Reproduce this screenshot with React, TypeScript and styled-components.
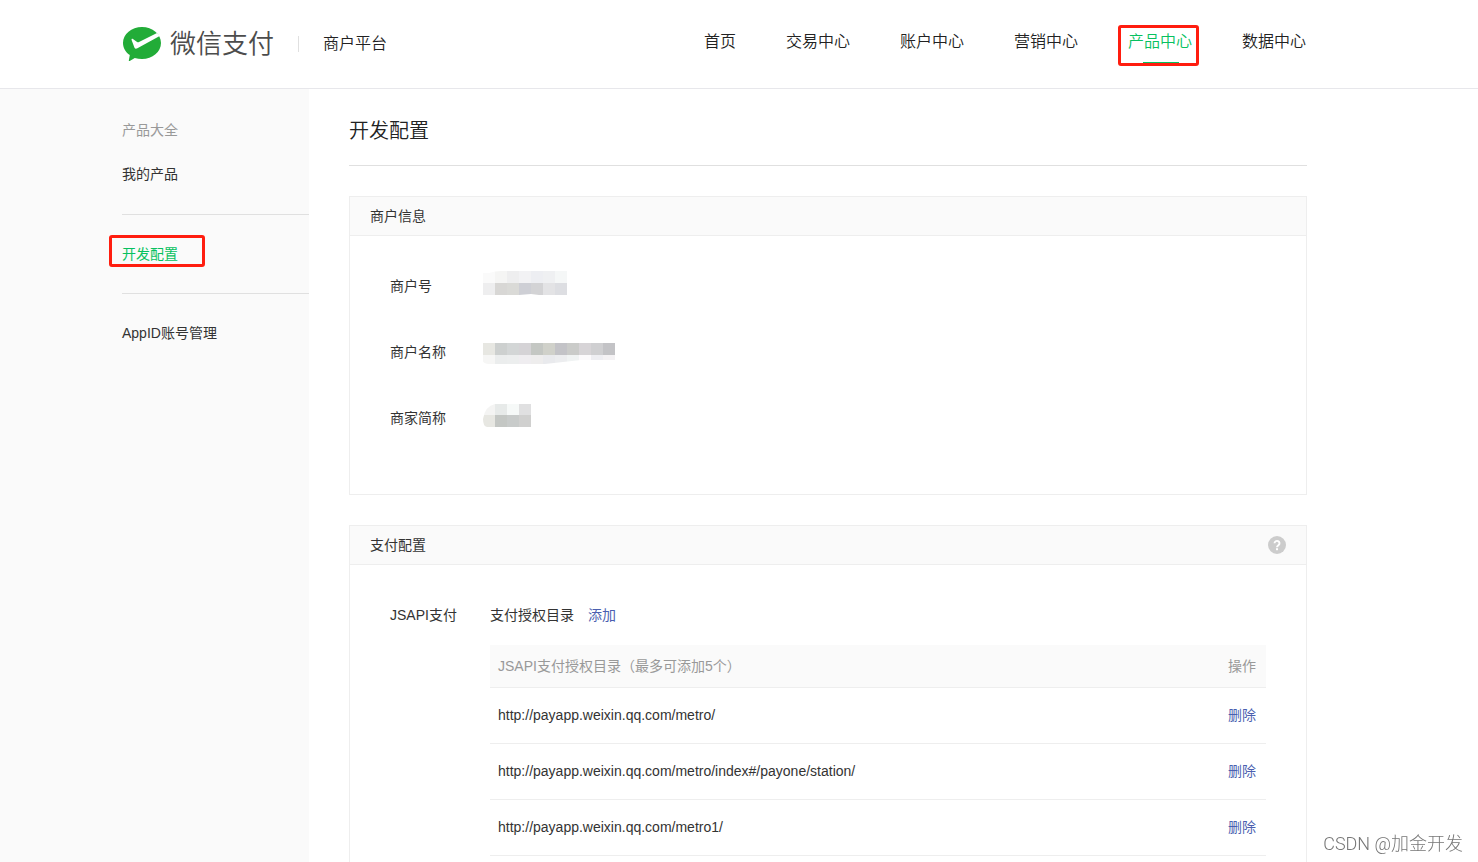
import React from 'react';
import styled, { createGlobalStyle } from 'styled-components';

const GlobalStyle = createGlobalStyle`
  *, *::before, *::after { box-sizing: border-box; }
  html, body { margin: 0; padding: 0; }
  body {
    font-family: "Liberation Sans", "Noto Sans CJK SC", sans-serif;
    font-size: 14px;
    line-height: 20px;
    color: #333;
    background: #fff;
  }
  h1, h2, p, ul, dl, dd { margin: 0; padding: 0; font-weight: 400; }
  ul { list-style: none; }
`;

const Page = styled.div`
  min-height: 100vh;
  display: flex;
  flex-direction: column;
`;

const Header = styled.header`
  display: flex;
  align-items: center;
  height: 89px;
  padding: 0 172px 0 122px;
  border-bottom: 1px solid #e7e7eb;
`;

const Brand = styled.a`
  display: flex;
  align-items: center;
  color: #4c4c4c;
  text-decoration: none;
`;

const BrandName = styled.span`
  margin-left: 8px;
  font-size: 26px;
  line-height: 36px;
  font-weight: 350;
  white-space: nowrap;
`;

const Platform = styled.span`
  margin-left: 24px;
  display: flex;
  align-items: center;
  font-size: 16px;
  line-height: 24px;
  font-weight: 350;
  white-space: nowrap;
  color: #222;

  &::before {
    content: "";
    width: 1px;
    height: 16px;
    margin-right: 24px;
    background: #e0e0e0;
  }
`;

const Nav = styled.nav`
  display: flex;
  gap: 50px;
  margin-left: auto;
  padding-bottom: 4px;
`;

const NavLink = styled.a<{ $active?: boolean }>`
  position: relative;
  font-size: 16px;
  line-height: 24px;
  font-weight: 350;
  white-space: nowrap;
  text-decoration: none;
  color: ${(p) => (p.$active ? '#07c160' : '#222')};

  &::after {
    content: "";
    display: ${(p) => (p.$active ? 'block' : 'none')};
    position: absolute;
    left: 15px;
    bottom: -10px;
    width: 36px;
    height: 2px;
    background: #07c160;
  }
`;

const Marker = styled.span`
  position: absolute;
  border: 3px solid #ff1d0f;
  border-radius: 3px;
  pointer-events: none;
`;

const NavMarker = styled(Marker)`
  inset: -5px -7px -12px -10px;
  z-index: 1;
`;

const MenuMarker = styled(Marker)`
  inset: -9px -27px -3px -13px;
`;

const Body = styled.div`
  flex: 1;
  display: flex;
`;

const Sidebar = styled.aside`
  flex: none;
  width: 309px;
  padding: 31px 0 0 122px;
  background: #fafafa;
`;

const MenuGroup = styled.ul`
  display: flex;
  flex-direction: column;
  align-items: flex-start;
  gap: 24px;
  padding-bottom: 30px;

  & + & {
    padding: 29px 0;
    border-top: 1px solid #e0e0e0;
  }
`;

const MenuLink = styled.a<{ $tone?: 'muted' | 'active' }>`
  position: relative;
  display: block;
  text-decoration: none;
  color: ${(p) => (p.$tone === 'muted' ? '#999' : p.$tone === 'active' ? '#07c160' : '#333')};
`;

const Main = styled.main`
  flex: 1;
  min-width: 0;
  display: flex;
  flex-direction: column;
  padding: 28px 171px 0 40px;
`;

const Title = styled.h1`
  && { font-weight: 350; }
  padding-bottom: 20px;
  font-size: 20px;
  line-height: 28px;
  color: #222;
  border-bottom: 1px solid #e0e0e0;
`;

const Card = styled.section<{ $fill?: boolean }>`
  margin-top: 30px;
  border: 1px solid #eee;
  ${(p) => p.$fill && 'flex: 1; border-bottom: 0;'}
`;

const CardHead = styled.div`
  display: flex;
  align-items: center;
  justify-content: space-between;
  height: 39px;
  padding: 0 20px;
  background: #fafafa;
  border-bottom: 1px solid #eee;
`;

const CardTitle = styled.h2`
  font-size: 14px;
`;

const HelpButton = styled.button`
  display: block;
  padding: 0;
  border: 0;
  background: none;
  line-height: 0;
  cursor: pointer;
`;

const InfoList = styled.dl`
  display: flex;
  flex-direction: column;
  gap: 46px;
  padding: 40px 40px 66px;
`;

const InfoRow = styled.div`
  display: flex;
  height: 20px;
`;

const InfoLabel = styled.dt`
  width: 93px;
`;

const InfoValue = styled.dd<{ $rise: number }>`
  height: 0;
  margin-top: -${(p) => p.$rise}px;
`;

const PayConfig = styled.div`
  display: flex;
  padding: 40px 40px 0;
`;

const PayLabel = styled.div`
  flex: none;
  width: 100px;
`;

const PayContent = styled.div`
  flex: 1;
  min-width: 0;
`;

const TextLink = styled.a`
  color: #4b5fb0;
  text-decoration: none;
`;

const PayTitle = styled.div`
  display: flex;
  gap: 14px;
`;

const Table = styled.table`
  width: 100%;
  margin-top: 20px;
  border-collapse: separate;
  border-spacing: 0;
`;

const HeadCell = styled.th<{ $end?: boolean }>`
  height: 43px;
  padding: 0 10px 0 8px;
  font-weight: 400;
  text-align: ${(p) => (p.$end ? 'right' : 'left')};
  color: #999;
  background: #fafafa;
  border-bottom: 1px solid #eee;
`;

const Cell = styled.td<{ $end?: boolean }>`
  height: 56px;
  padding: 0 10px 2px 8px;
  text-align: ${(p) => (p.$end ? 'right' : 'left')};
  border-bottom: 1px solid #eee;
`;

const Watermark = styled.div`
  position: fixed;
  right: 15px;
  bottom: 6px;
  font-family: Roboto, "Noto Sans CJK SC", sans-serif;
  font-size: 18px;
  line-height: 24px;
  font-weight: 300;
  color: #777;
`;

const Logo = () => (
  <svg width="40" height="36" viewBox="0 0 40 36" aria-hidden="true">
    <path
      d="M20 1C9.500 1 1 8.100 1 17c0 5 2.600 9.200 6.800 12.100L6.800 34.500c0 .5.400.600.900.400l5.100-2.900c2.300.700 4.700 1 7.200 1 10.500 0 19-7.100 19-16S30.500 1 20 1z"
      fill="#22ac38"
    />
    <path
      d="M9.600 13.900c-.300-.9.500-1.500 1.300-1l4.200 3.100c.600.400 1.200.5 1.900.1L35 7.100l2.700 2.900L15.400 22.300c-1.200.7-2.400.6-2.900-.6z"
      fill="#fff"
    />
  </svg>
);

const HelpIcon = () => (
  <svg width="18" height="18" viewBox="0 0 18 18" aria-hidden="true">
    <circle cx="9" cy="9" r="9" fill="#ccc" />
    <path d="M6.500 7.200a2.500 2.400 0 1 1 4.100 1.900C9.600 9.900 9 10.100 9 11.300" fill="none" stroke="#fff" strokeWidth="1.900" />
    <rect x="8" y="12.200" width="2" height="2" fill="#fff" />
  </svg>
);

type Mosaic = { label: string; rise: number; shape: string; rows: { y: number; h: number; tones: string[] }[] };

const merchantInfo: Mosaic[] = [
  {
    label: '商户号',
    rise: 5,
    shape: 'M0 2h6q6-2 12-2h66v24H56l-8-1-12 1H0z',
    rows: [
      { y: 0, h: 12, tones: ['#fafafa', '#f5f5f4', '#eeeeef', '#f2f2f4', '#edeef2', '#eff0f2', '#f5f7f7'] },
      { y: 12, h: 12, tones: ['#eeeeef', '#d8d7d5', '#dadad7', '#cecfd5', '#d3d3d5', '#e3e3e5', '#dddee2'] },
    ],
  },
  {
    label: '商户名称',
    rise: 1,
    shape: 'M0 2h132v17h-34l-18 2-18 2H5q-5-1-5-3z',
    rows: [
      { y: 2, h: 12, tones: ['#e7e7e2', '#cdd0cf', '#d3d6d6', '#d5d3d6', '#c4c7c3', '#d0d1ca', '#c3c3c7', '#cacbc9', '#d7d4d7', '#cfcfd1', '#c3c3c6'] },
      { y: 14, h: 9, tones: ['#f6f6f5', '#ebeded', '#eceeee', '#efedf0', '#eeeded', '#e9eaed', '#ecedef', '#f0f3f3', '#fcfafc', '#eeeef2', '#f4f2f4'] },
    ],
  },
  {
    label: '商家简称',
    rise: 4,
    shape: 'M12 0h36v23H4q-4-1-4-8Q2 2 12 0z',
    rows: [
      { y: 0, h: 11, tones: ['#f4f4f3', '#e7eae9', '#f6f9f8', '#e0e0e1'] },
      { y: 11, h: 12, tones: ['#e7e7e2', '#c4c7c4', '#c8cbca', '#d0d0cf'] },
    ],
  },
];

const MosaicPatch = ({ id, item }: { id: string; item: Mosaic }) => (
  <svg width="132" height="24" viewBox="0 0 132 24" aria-hidden="true">
    <clipPath id={id}>
      <path d={item.shape} />
    </clipPath>
    <g clipPath={`url(#${id})`} shapeRendering="crispEdges">
      {item.rows.map((row) =>
        row.tones.map((tone, i) => (
          <rect key={`${row.y}-${i}`} x={i * 12} y={row.y} width="12" height={row.h} fill={tone} />
        )),
      )}
    </g>
  </svg>
);

const navItems = ['首页', '交易中心', '账户中心', '营销中心', '产品中心', '数据中心'];

const payDirectories = [
  'http://payapp.weixin.qq.com/metro/',
  'http://payapp.weixin.qq.com/metro/index#/payone/station/',
  'http://payapp.weixin.qq.com/metro1/',
];

export default function App() {
  return (
    <Page lang="zh-CN">
      <GlobalStyle />
      <Header>
        <Brand href="#">
          <Logo />
          <BrandName>微信支付</BrandName>
        </Brand>
        <Platform>商户平台</Platform>
        <Nav>
          {navItems.map((name) => {
            const active = name === '产品中心';
            return (
              <NavLink key={name} href="#" $active={active}>
                {name}
                {active && <NavMarker />}
              </NavLink>
            );
          })}
        </Nav>
      </Header>
      <Body>
        <Sidebar>
          <MenuGroup>
            <li><MenuLink href="#" $tone="muted">产品大全</MenuLink></li>
            <li><MenuLink href="#">我的产品</MenuLink></li>
          </MenuGroup>
          <MenuGroup>
            <li><MenuLink href="#" $tone="active">开发配置<MenuMarker /></MenuLink></li>
          </MenuGroup>
          <MenuGroup>
            <li><MenuLink href="#">AppID账号管理</MenuLink></li>
          </MenuGroup>
        </Sidebar>
        <Main>
          <Title>开发配置</Title>
          <Card>
            <CardHead><CardTitle>商户信息</CardTitle></CardHead>
            <InfoList>
              {merchantInfo.map((item, i) => (
                <InfoRow key={item.label}>
                  <InfoLabel>{item.label}</InfoLabel>
                  <InfoValue $rise={item.rise}><MosaicPatch id={`patch-${i}`} item={item} /></InfoValue>
                </InfoRow>
              ))}
            </InfoList>
          </Card>
          <Card $fill>
            <CardHead>
              <CardTitle>支付配置</CardTitle>
              <HelpButton type="button" aria-label="帮助"><HelpIcon /></HelpButton>
            </CardHead>
            <PayConfig>
              <PayLabel>JSAPI支付</PayLabel>
              <PayContent>
                <PayTitle>
                  <span>支付授权目录</span>
                  <TextLink href="#">添加</TextLink>
                </PayTitle>
                <Table>
                  <thead>
                    <tr>
                      <HeadCell scope="col">JSAPI支付授权目录（最多可添加5个）</HeadCell>
                      <HeadCell scope="col" $end>操作</HeadCell>
                    </tr>
                  </thead>
                  <tbody>
                    {payDirectories.map((url) => (
                      <tr key={url}>
                        <Cell>{url}</Cell>
                        <Cell $end><TextLink href="#">删除</TextLink></Cell>
                      </tr>
                    ))}
                  </tbody>
                </Table>
              </PayContent>
            </PayConfig>
          </Card>
        </Main>
      </Body>
      <Watermark>CSDN @加金开发</Watermark>
    </Page>
  );
}
